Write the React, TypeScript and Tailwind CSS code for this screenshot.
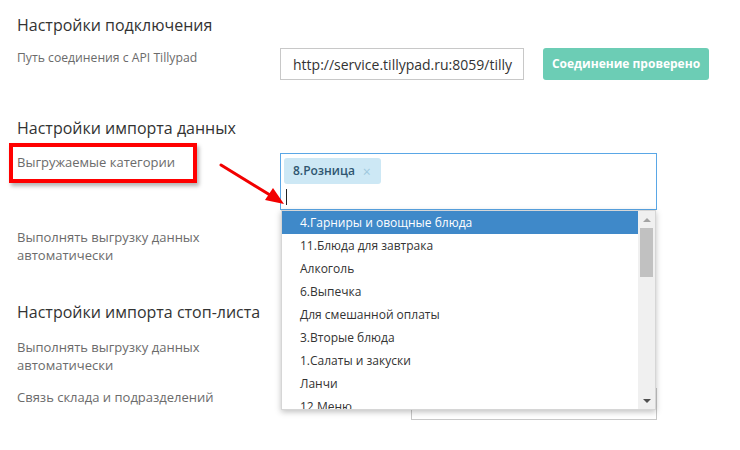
const CATEGORIES = [
  "4.Гарниры и овощные блюда",
  "11.Блюда для завтрака",
  "Алкоголь",
  "6.Выпечка",
  "Для смешанной оплаты",
  "3.Вторые блюда",
  "1.Салаты и закуски",
  "Ланчи",
  "12.Меню",
];

function Heading({ children, className = "" }: { children: React.ReactNode; className?: string }) {
  return <h2 className={`text-[16px] leading-[24px] text-[#333333] ${className}`}>{children}</h2>;
}

function Label({ children }: { children: React.ReactNode }) {
  return <div className="w-[263px] shrink-0 pr-4 text-[13px] leading-[18px] text-[#6b6b6b]">{children}</div>;
}

export default function App() {
  return (
    <div
      className="relative h-[450px] w-[740px] overflow-hidden bg-white px-[17px] pt-[13px]"
      style={{ fontFamily: '"Open Sans", "Noto Sans", sans-serif' }}
    >
      {/* ─── Подключение ─── */}
      <Heading>Настройки подключения</Heading>
      <div className="mt-[11px] flex">
        <Label>
          <div className="pt-[1px] text-[12.2px]">Путь соединения с API Tillypad</div>
        </Label>
        <div className="flex h-[32px] w-[244px] items-center overflow-hidden whitespace-nowrap border border-[#c8c8c8] px-[12px] text-[14px] text-[#333333]">
          http://service.tillypad.ru:8059/tilly
        </div>
        <button className="ml-[19px] h-[32px] w-[166px] rounded-[3px] bg-[#6ccdb5] text-[12px] font-bold text-white">
          Соединение проверено
        </button>
      </div>

      {/* ─── Импорт данных ─── */}
      <Heading className="mt-[36px]">Настройки импорта данных</Heading>
      <div className="mt-[13px] flex">
        <Label>Выгружаемые категории</Label>
        <div className="h-[57px] w-[377px] border border-[#5aa7e6] px-[3px] pt-[3px]">
          <span className="inline-flex h-[26px] items-center gap-[8px] rounded-[3px] bg-[#cde8f5] pl-[9px] pr-[10px] text-[12px] font-semibold text-[#2f5670]">
            8.Розница
            <span className="text-[14px] font-normal text-[#9fc8de]">×</span>
          </span>
          <div className="ml-[2px] mt-[5px] h-[16px] w-px bg-[#222]" />
        </div>
      </div>
      <div className="mt-[18px] flex">
        <Label>
          Выполнять выгрузку данных
          <br />
          автоматически
        </Label>
      </div>

      {/* ─── Стоп-лист ─── */}
      <Heading className="mt-[36px]">Настройки импорта стоп-листа</Heading>
      <div className="mt-[14px] flex">
        <Label>
          Выполнять выгрузку данных
          <br />
          автоматически
        </Label>
      </div>
      <div className="mt-[14px] flex">
        <Label>Связь склада и подразделений</Label>
        <div className="ml-[131px] h-[32px] w-[246px] border border-[#c8c8c8]" />
      </div>

      {/* ─── Dropdown overlay ─── */}
      <div className="absolute left-[281px] top-[210px] flex h-[200px] w-[375px] border border-[#d6d6d6] bg-white shadow-[0_2px_6px_rgba(0,0,0,0.25)]">
        <ul className="flex-1 overflow-hidden">
          {CATEGORIES.map((c, i) => (
            <li
              key={c}
              className={`h-[23px] pl-[18px] text-[12px] leading-[23px] ${
                i === 0 ? "bg-[#3f89c9] text-white" : "text-[#333333]"
              }`}
            >
              {c}
            </li>
          ))}
        </ul>
        <div className="flex w-[17px] flex-col items-center bg-[#f0f0f0]">
          <div className="flex h-[17px] items-center justify-center">
            <div className="h-0 w-0 border-x-[4px] border-b-[4px] border-x-transparent border-b-[#a3a3a3]" />
          </div>
          <div className="h-[49px] w-[13px] bg-[#c1c1c1]" />
          <div className="flex-1" />
          <div className="flex h-[17px] items-center justify-center">
            <div className="h-0 w-0 border-x-[4px] border-t-[4px] border-x-transparent border-t-[#505050]" />
          </div>
        </div>
      </div>

      {/* ─── Annotation ─── */}
      <div className="pointer-events-none absolute left-[9px] top-[143px] h-[40px] w-[188px] border-[4px] border-[#ff0000] shadow-[2px_3px_4px_rgba(0,0,0,0.3)]" />
      <svg className="pointer-events-none absolute left-0 top-0" width="740" height="450">
        <line x1="221" y1="165" x2="270" y2="195" stroke="#f20000" strokeWidth="3" strokeLinecap="round" />
        <polygon points="284,204 265,200 273,188" fill="#f20000" />
      </svg>
    </div>
  );
}
